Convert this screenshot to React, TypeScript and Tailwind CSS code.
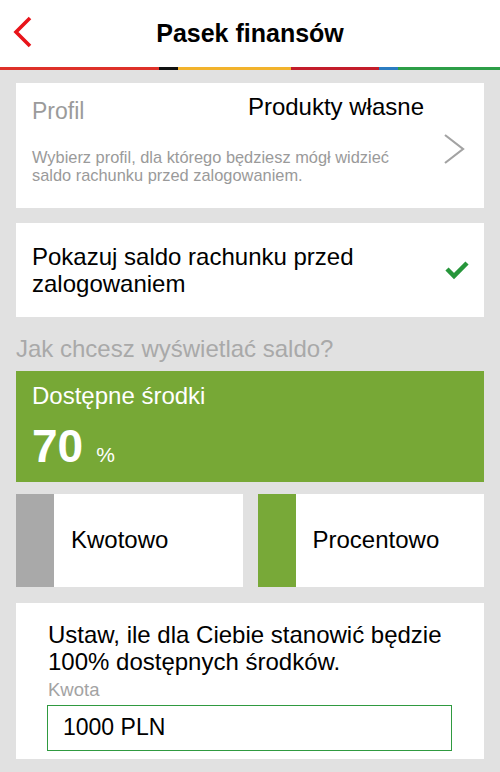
import React from 'react';

const font = { fontFamily: '"Liberation Sans", Arial, sans-serif' };

const stripe = [
  { w: 'w-[159px]', c: 'bg-[#de3129]' },
  { w: 'w-[19px]', c: 'bg-[#111111]' },
  { w: 'w-[113px]', c: 'bg-[#f2b32c]' },
  { w: 'w-[88px]', c: 'bg-[#c31d2a]' },
  { w: 'w-[19px]', c: 'bg-[#2b7cc1]' },
  { w: 'flex-1', c: 'bg-[#2d9e47]' },
];

const App: React.FC = () => {
  return (
    <div className="min-h-[772px] bg-[#e1e1e1]" style={font}>
      {/* header */}
      <div className="relative flex h-[67px] items-center justify-center bg-white">
        <svg className="absolute left-[10px] top-[15px]" width="26" height="34" viewBox="0 0 26 34">
          <polyline points="20,3 6,17 20,31" fill="none" stroke="#e8141a" strokeWidth="3.6" />
        </svg>
        <h1 className="text-[25px] font-bold text-black">Pasek finansów</h1>
      </div>
      <div className="flex h-[3px]">
        {stripe.map((s, i) => (
          <div key={i} className={`${s.w} ${s.c}`} />
        ))}
      </div>

      <div className="px-4 pt-[13px] pb-[13px]">
        {/* profil */}
        <div className="flex items-center bg-white pl-4 pr-[18px]">
          <div className="flex-1 pt-[14px] pb-[24px]">
            <div className="flex items-start justify-between pr-[2px]">
              <span className="text-[23px] leading-[28px] text-[#9b9b9b]">Profil</span>
              <span className="text-[24px] leading-[20px] text-black">Produkty własne</span>
            </div>
            <p className="mt-[23px] text-[16.4px] leading-[18px] text-[#9a9a9a]">
              Wybierz profil, dla którego będziesz mógł widzieć
              <br />
              saldo rachunku przed zalogowaniem.
            </p>
          </div>
          <svg className="ml-[16px] mt-[6px]" width="24" height="32" viewBox="0 0 24 32">
            <polyline points="3,2 21,16 3,30" fill="none" stroke="#a3a3a3" strokeWidth="2.2" />
          </svg>
        </div>

        {/* pokazuj saldo */}
        <div className="mt-[15px] flex items-center bg-white pl-4 pr-[14px] pt-[20px] pb-[20px]">
          <p className="flex-1 text-[24px] leading-[27px] text-black">
            Pokazuj saldo rachunku przed
            <br />
            zalogowaniem
          </p>
          <svg width="26" height="20" viewBox="0 0 26 20">
            <polyline points="3,9 10,16 23,3" fill="none" stroke="#27963b" strokeWidth="4.5" />
          </svg>
        </div>

        <p className="mt-[18px] mb-[8px] text-[24px] leading-[28px] text-[#a9a9a9]">
          Jak chcesz wyświetlać saldo?
        </p>

        {/* dostepne srodki */}
        <div className="bg-[#77a836] px-4 pt-[11px] pb-[11px] text-white">
          <p className="text-[24px] leading-[28px]">Dostępne środki</p>
          <div className="mt-[13px] flex items-baseline gap-[13px]">
            <span className="text-[46px] font-bold leading-[46px]">70</span>
            <span className="text-[21px]">%</span>
          </div>
        </div>

        {/* tryb */}
        <div className="mt-[12px] grid grid-cols-2 gap-[15px]">
          <div className="flex h-[93px] items-center bg-white">
            <div className="h-full w-[38px] bg-[#a9a9a9]" />
            <span className="ml-[17px] text-[24px] text-black">Kwotowo</span>
          </div>
          <div className="flex h-[93px] items-center bg-white">
            <div className="h-full w-[38px] bg-[#78a938]" />
            <span className="ml-[17px] text-[24px] text-black">Procentowo</span>
          </div>
        </div>

        {/* kwota */}
        <div className="mt-[16px] bg-white pl-[31px] pr-[32px] pt-[18px] pb-[8px]">
          <p className="pl-[1px] text-[24px] leading-[27px] text-black">
            Ustaw, ile dla Ciebie stanowić będzie
            <br />
            100% dostępnych środków.
          </p>
          <p className="mt-[4px] pl-[1px] text-[18.5px] leading-[22px] text-[#a3a3a3]">Kwota</p>
          <div className="mt-[4px] flex h-[46px] items-center border border-[#2f9a40] pl-[15px]">
            <span className="text-[23px] text-black">1000 PLN</span>
          </div>
        </div>
      </div>
    </div>
  );
};

export default App;
